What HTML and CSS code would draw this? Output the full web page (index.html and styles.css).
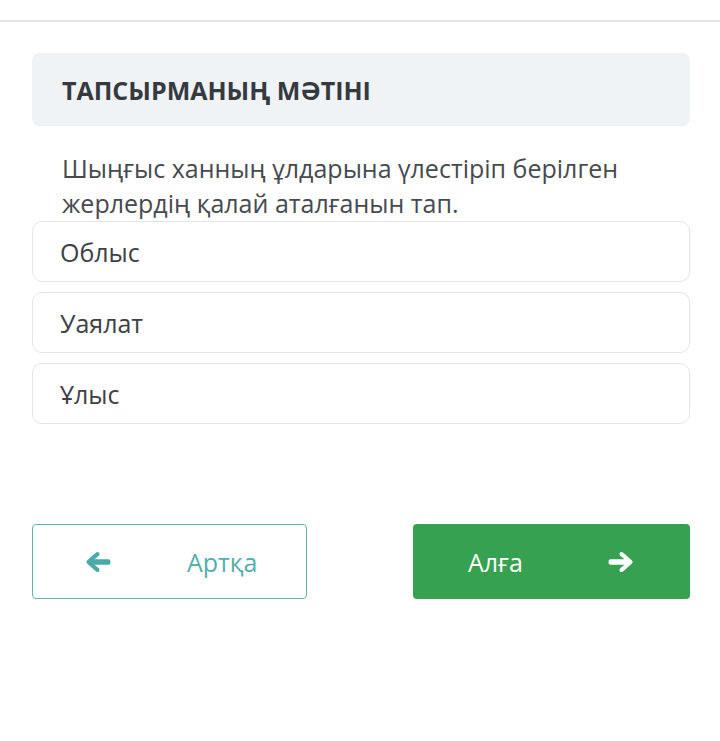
FILE: index.html
```html
<!DOCTYPE html>
<html>
<head>
<meta charset="UTF-8">
<meta name="viewport" content="width=device-width, initial-scale=1">
<link rel="stylesheet" href="styles.css">
</head>
<body>
<div class="topbar"></div>
<div class="task">
	<div class="task-head">ТАПСЫРМАНЫҢ МӘТІНІ</div>
	<div class="task-text">Шыңғыс ханның ұлдарына үлестіріп берілген жерлердің қалай аталғанын тап.</div>
	<div class="answers">
		<div class="answer">Облыс</div>
		<div class="answer">Уаялат</div>
		<div class="answer">Ұлыс</div>
	</div>
	<div class="nav">
		<a class="btn btn-back">
			<svg class="arrow" viewBox="0 0 26 22"><path d="M11 1.5 L2 9.5 Q0.8 11 2 12.5 L11 20.5 Q12.8 21.8 14.2 20.2 Q15.2 18.6 13.8 17.2 L9.5 13.8 H23.5 Q25.5 13.8 25.5 11 Q25.5 8.2 23.5 8.2 H9.5 L13.8 4.8 Q15.2 3.4 14.2 1.8 Q12.8 0.2 11 1.5 Z"/></svg>
			<span>Артқа</span>
		</a>
		<a class="btn btn-next">
			<span>Алға</span>
			<svg class="arrow" viewBox="0 0 26 22"><path transform="rotate(180 13 11)" d="M11 1.5 L2 9.5 Q0.8 11 2 12.5 L11 20.5 Q12.8 21.8 14.2 20.2 Q15.2 18.6 13.8 17.2 L9.5 13.8 H23.5 Q25.5 13.8 25.5 11 Q25.5 8.2 23.5 8.2 H9.5 L13.8 4.8 Q15.2 3.4 14.2 1.8 Q12.8 0.2 11 1.5 Z"/></svg>
		</a>
	</div>
</div>
</body>
</html>
```
FILE: styles.css
```css
html, body {
	margin: 0;
	padding: 0;
	background: #fff;
	font-family: "Open Sans", "Noto Sans", sans-serif;
	color: #3d4145;
}
.topbar {
	height: 20px;
	border-bottom: 2px solid #e6e6e6;
}
.task {
	padding: 31px 30px 0 32px;
}
.task-head {
	background: #f0f3f5;
	border-radius: 7px;
	height: 73px;
	padding: 0 30px;
	display: flex;
	align-items: center;
	font-size: 25px;
	font-weight: 700;
	color: #353a40;
}
.task-text {
	padding: 25px 30px 0 30px;
	font-size: 25px;
	line-height: 35px;
	color: #464a4e;
}
.answers {
	display: flex;
	flex-direction: column;
	gap: 10px;
}
.answer {
	height: 59px;
	border: 1px solid #e2e6e8;
	border-radius: 10px;
	padding: 0 27px;
	display: flex;
	align-items: center;
	font-size: 25px;
	color: #3d4145;
}
.nav {
	display: flex;
	justify-content: space-between;
	margin-top: 100px;
}
.btn {
	width: 275px;
	height: 75px;
	border-radius: 4px;
	box-sizing: border-box;
	display: flex;
	align-items: center;
	font-size: 25px;
}
.btn .arrow {
	width: 26px;
	height: 22px;
}
.btn-back {
	border: 1px solid #5fb5b2;
	color: #55aeab;
	padding: 0 0 0 52px;
	gap: 76px;
}
.btn-back .arrow {
	fill: #4aaba6;
}
.btn-next {
	width: 277px;
	background: #36a150;
	color: #fff;
	padding: 0 56px 0 55px;
	justify-content: space-between;
}
.btn-next .arrow {
	fill: #fff;
}
```
